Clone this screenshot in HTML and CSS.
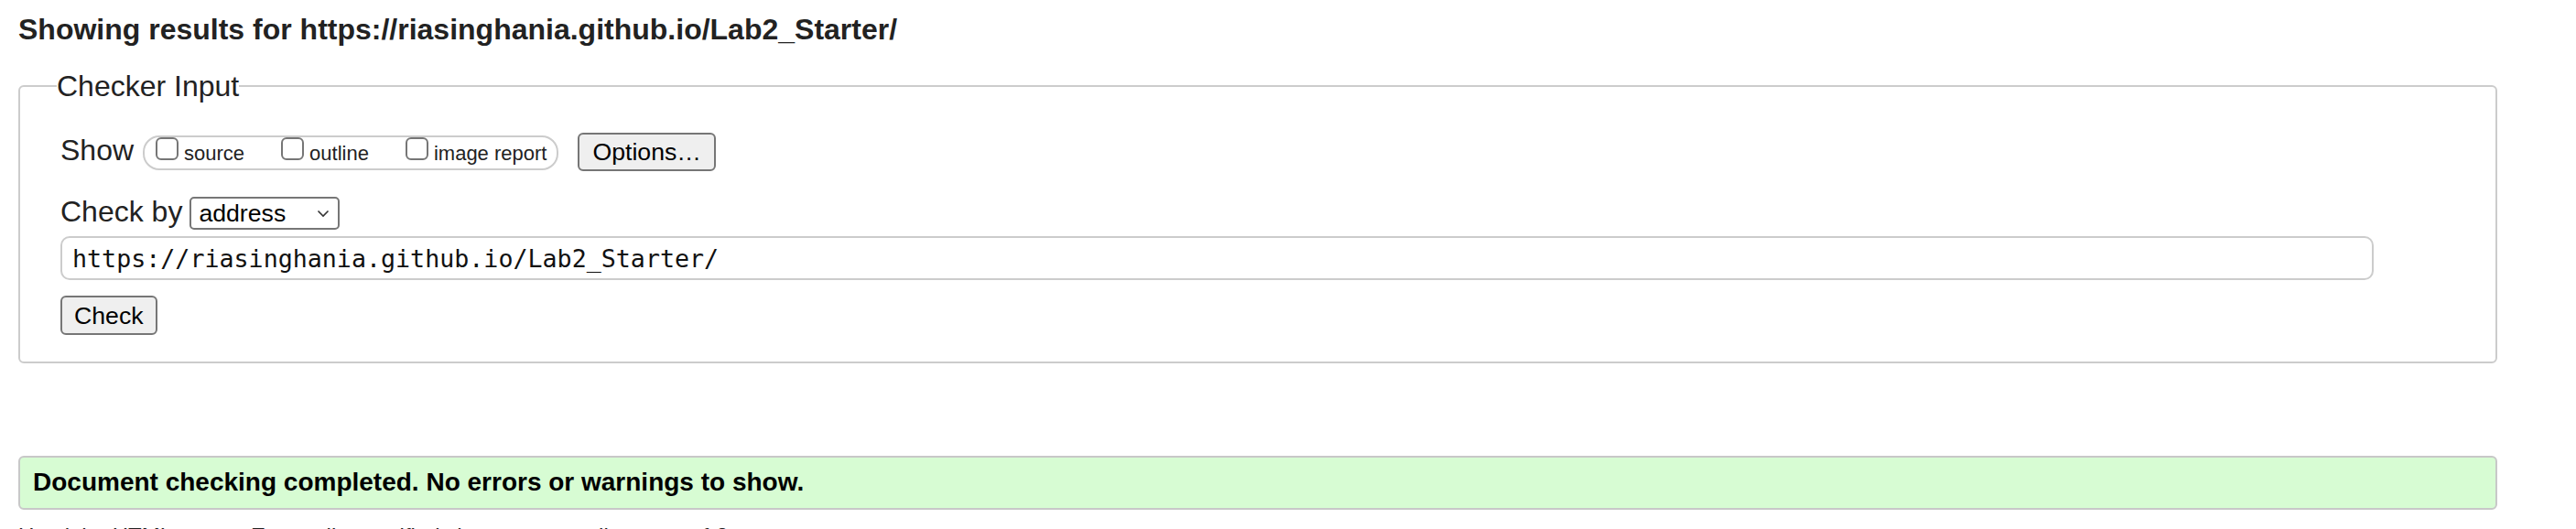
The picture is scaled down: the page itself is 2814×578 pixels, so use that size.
FILE: index.html
```html
<!DOCTYPE html>
<html lang="en">
<head>
<meta charset="utf-8">
<title>Nu Html Checker</title>
<link rel="stylesheet" href="styles.css">
</head>
<body>
<h2 class="title">Showing results for https://riasinghania.github.io/Lab2_Starter/</h2>
<form class="checker-form">
  <fieldset class="checker">
    <legend class="checker-legend">Checker Input</legend>
    <div class="row row-show">
      <span class="row-label">Show</span>
      <span class="opts">
        <label class="opt"><input class="box" type="checkbox">source</label>
        <label class="opt"><input class="box" type="checkbox">outline</label>
        <label class="opt"><input class="box" type="checkbox">image report</label>
      </span>
      <button type="button" class="btn btn-options">Options…</button>
    </div>
    <div class="row row-by">
      <span class="row-label">Check by</span>
      <span class="select-wrap">
        <select class="select"><option>address</option></select>
        <svg class="chev" width="14" height="9" viewBox="0 0 14 9"><polyline points="1.5,1.5 7,7 12.5,1.5" fill="none" stroke="#333" stroke-width="1.6"/></svg>
      </span>
    </div>
    <input class="url" type="text" value="https://riasinghania.github.io/Lab2_Starter/">
    <div class="row row-check">
      <button type="button" class="btn btn-check">Check</button>
    </div>
  </fieldset>
</form>
<div class="success">Document checking completed. No errors or warnings to show.</div>
<p class="details">Used the HTML parser. Externally specified character encoding was utf-8.</p>
</body>
</html>
```
FILE: styles.css
```css
html, body {
  background: #fff;
}
body {
  margin: 0;
  padding: 0 86px 0 20px;
  font-family: "Liberation Sans", Arial, Helvetica, sans-serif;
  color: #222;
}
.title {
  font-size: 32px;
  line-height: 36px;
  font-weight: bold;
  margin: 14px 0 0;
  color: #222;
}
.checker-form {
  margin: 0;
}
.checker {
  margin: 26px 0 0;
  border: 2px solid #cccccc;
  border-radius: 6px;
  padding: 33px 133px 29px 44px;
  min-width: 0;
}
.checker-legend {
  font-size: 32px;
  line-height: 36px;
  padding: 0;
  margin-left: -4px;
  color: #222;
}
.row {
  display: flex;
  align-items: baseline;
}
.row-label {
  font-size: 32px;
  line-height: 36px;
  color: #222;
}
.opts {
  display: inline-flex;
  align-items: baseline;
  border: 2px solid #cccccc;
  border-radius: 18px;
  padding: 0 11px 0 12px;
  margin-left: 10px;
}
.opt {
  display: inline-flex;
  align-items: baseline;
  gap: 6px;
  font-size: 22px;
  line-height: 33px;
  color: #222;
  margin-right: 40px;
}
.opt:last-child {
  margin-right: 0;
}
.box {
  appearance: none;
  -webkit-appearance: none;
  width: 25px;
  height: 25px;
  margin: 0;
  border: 2px solid #767676;
  border-radius: 6px;
  background: #fff;
  box-sizing: border-box;
}
.btn {
  font-family: "Liberation Sans", Arial, sans-serif;
  font-size: 26.67px;
  line-height: 30px;
  height: 42px;
  box-sizing: border-box;
  padding: 4px 14px;
  border: 2px solid #767676;
  border-radius: 6px;
  background: #efefef;
  color: #000;
}
.btn-options {
  margin-left: 21px;
}
.row-by {
  margin-top: 26px;
  gap: 8px;
}
.select-wrap {
  position: relative;
  display: inline-flex;
}
.select {
  appearance: none;
  -webkit-appearance: none;
  font-family: "Liberation Sans", Arial, sans-serif;
  font-size: 26.67px;
  line-height: 30px;
  width: 164px;
  height: 36px;
  box-sizing: border-box;
  padding: 0 30px 0 8px;
  border: 2px solid #767676;
  border-radius: 5px;
  background: #fff;
  color: #000;
}
.chev {
  position: absolute;
  right: 11px;
  top: 14px;
  pointer-events: none;
}
.url {
  display: block;
  width: 100%;
  box-sizing: border-box;
  height: 48px;
  margin: 7px 0 0;
  padding: 0 11px;
  border: 2px solid #cccccc;
  border-radius: 10px;
  font-family: "DejaVu Sans Mono", "Liberation Mono", monospace;
  font-size: 26.67px;
  color: #111;
  background: #fff;
}
.row-check {
  margin-top: 17px;
}
.btn-check {
  height: 43px;
  padding: 4px 13px;
}
.success {
  margin-top: 101px;
  border: 2px solid #c8c8c8;
  border-radius: 6px;
  background: #d7fcd3;
  padding: 11px 14px 12px;
  font-size: 28px;
  line-height: 32px;
  font-weight: bold;
  color: #000;
}
.details {
  margin: 15px 0 0;
  font-size: 24px;
  line-height: 28px;
  color: #222;
}
```
